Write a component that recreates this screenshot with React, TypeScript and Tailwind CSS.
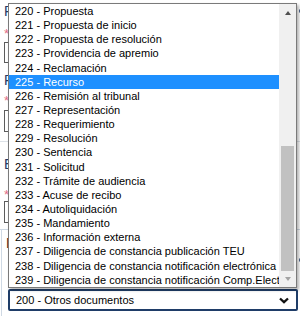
import React from "react";

const items = [
  "220 - Propuesta",
  "221 - Propuesta de inicio",
  "222 - Propuesta de resolución",
  "223 - Providencia de apremio",
  "224 - Reclamación",
  "225 - Recurso",
  "226 - Remisión al tribunal",
  "227 - Representación",
  "228 - Requerimiento",
  "229 - Resolución",
  "230 - Sentencia",
  "231 - Solicitud",
  "232 - Trámite de audiencia",
  "233 - Acuse de recibo",
  "234 - Autoliquidación",
  "235 - Mandamiento",
  "236 - Información externa",
  "237 - Diligencia de constancia publicación TEU",
  "238 - Diligencia de constancia notificación electrónica",
  "239 - Diligencia de constancia notificación Comp.Electrónica",
];

const selected = "225 - Recurso";

const SideIcon = () => (
  <span className="block shrink-0 w-[6px] h-[6px] rounded-full border border-[#34507a] bg-[#dbe6f3]" />
);

const App = () => {
  return (
    <div className="relative w-[300px] h-[316px] overflow-hidden bg-white font-['Liberation_Sans',Arial,sans-serif]">
      {/* page behind the open select */}
      <div className="h-[142px] border-b border-[#dde2e8] pl-[4px]">
        <div className="flex justify-between items-center pt-[3px] leading-[16px] -mr-[5px]">
          <span className="text-[14px] text-[#233a66]">Procedimiento</span>
          <SideIcon />
        </div>
        <div className="mt-[9px] leading-[12px] text-[13px] text-[#e26d86]">*</div>
        <div className="mt-[2px] h-[21px] w-[270px] border border-[#5c5c5c]" />
        <div className="mt-[9px] leading-[16px] text-[14px] text-[#233a66]">Procedencia</div>
        <div className="mt-[7px] leading-[12px] text-[13px] text-[#e26d86]">*</div>
        <div className="mt-[3px] h-[22px] w-[270px] border border-[#5c5c5c]" />
      </div>
      <div className="h-[88px] border-b border-[#cfd9e4] pl-[4px]">
        <div className="pt-[14px] leading-[16px] text-[14px] text-[#233a66]">Expediente</div>
        <div className="mt-[17px] leading-[12px] text-[13px] text-[#e26d86]">*</div>
        <div className="h-[22px] w-[270px] border border-[#5c5c5c]" />
      </div>
      <div className="ml-[1px] h-[86px] border-l border-[#cfd9e4] pl-[6px] pr-[3px]">
        <div className="pt-[5px] leading-[16px]">
          <span className="-ml-[2px] text-[14px] text-[#5a2e22]">Documento</span>
        </div>
        <div className="flex justify-end pt-[6px] -mr-[8px]">
          <SideIcon />
        </div>
        <div className="mt-[26px] flex items-center justify-between h-[22px] w-[290px] border-2 border-[#1f3d68] rounded-[2px] pl-[6px] pr-[7px]">
          <span className="text-[11px] text-black">200 - Otros documentos</span>
          <svg width="10" height="7" viewBox="0 0 10 7">
            <path d="M1 1.5 L5 5.2 L9 1.5" fill="none" stroke="#111" strokeWidth="2.3" />
          </svg>
        </div>
      </div>

      {/* open dropdown list */}
      <div className="absolute left-[8px] top-[3px] w-[289px] h-[285px] flex border border-[#7a7a7a] bg-white shadow-[2px_2px_3px_rgba(0,0,0,0.3)]">
        <div className="flex-1 overflow-hidden">
          {items.map((item) => (
            <div
              key={item}
              className={
                item === selected
                  ? "h-[14.15px] leading-[14px] pl-[6px] whitespace-nowrap text-[11px] bg-[#1e90ff] text-white"
                  : "h-[14.15px] leading-[14px] pl-[6px] whitespace-nowrap text-[11px] text-black"
              }
            >
              {item}
            </div>
          ))}
        </div>
        <div className="w-[17px] flex flex-col bg-[#f0f0f0]">
          <div className="h-[17px] flex items-center justify-center">
            <span className="block w-0 h-0 border-l-[3.5px] border-r-[3.5px] border-b-[4px] border-l-transparent border-r-transparent border-b-[#505050]" />
          </div>
          <div className="flex-1 pt-[125px]">
            <div className="mx-auto w-[13px] h-[125px] bg-[#c1c1c1]" />
          </div>
          <div className="h-[16px] flex items-center justify-center">
            <span className="block w-0 h-0 border-l-[3.5px] border-r-[3.5px] border-t-[4px] border-l-transparent border-r-transparent border-t-[#a3a3a3]" />
          </div>
        </div>
      </div>
    </div>
  );
};

export default App;
